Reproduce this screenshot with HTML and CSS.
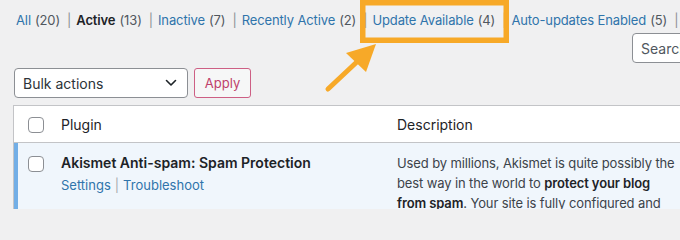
FILE: index.html
```html
<!DOCTYPE html>
<html lang="en">
<head>
<meta charset="utf-8">
<title>Plugins</title>
<link rel="stylesheet" href="styles.css">
</head>
<body>
<div class="page">
  <ul class="filters">
    <li><a class="link">All</a> <span class="count">(20)</span><span class="sep">|</span></li>
    <li><a class="current">Active</a> <span class="count">(13)</span><span class="sep">|</span></li>
    <li><a class="link">Inactive</a> <span class="count">(7)</span><span class="sep">|</span></li>
    <li><a class="link">Recently Active</a> <span class="count">(2)</span><span class="sep">|</span></li>
    <li><a class="link">Update Available</a> <span class="count">(4)</span><span class="sep">|</span></li>
    <li><a class="link">Auto-updates Enabled</a> <span class="count">(5)</span><span class="sep">|</span></li>
  </ul>

  <div class="search-row">
    <input class="search" type="search" placeholder="Search installed plugins...">
  </div>

  <div class="bulk-row">
    <div class="select">
      <span>Bulk actions</span>
      <svg class="chev" width="12" height="8" viewBox="0 0 12 8"><path d="M1.5 1.5 L6 6 L10.5 1.5" fill="none" stroke="#1d2327" stroke-width="1.6" stroke-linecap="round" stroke-linejoin="round"/></svg>
    </div>
    <button class="apply">Apply</button>
  </div>

  <div class="table">
    <div class="thead">
      <div class="cell check"><span class="cb"></span></div>
      <div class="cell col-plugin">Plugin</div>
      <div class="cell col-desc">Description</div>
    </div>
    <div class="row active">
      <div class="cell check"><span class="cb"></span></div>
      <div class="cell col-plugin">
        <div class="title">Akismet Anti-spam: Spam Protection</div>
        <div class="actions"><a class="link">Settings</a><span class="sep2">|</span><a class="link">Troubleshoot</a></div>
      </div>
      <div class="cell col-desc">
        <p class="desc">Used by millions, Akismet is quite possibly the best way in the world to <strong>protect your blog</strong> <strong>from spam</strong>. Your site is fully configured and</p>
      </div>
    </div>
  </div>

  <svg class="annot" width="680" height="209" viewBox="0 0 680 209">
    <rect x="362.75" y="2.75" width="143.5" height="37.5" fill="none" stroke="#f7a928" stroke-width="5.5"/>
    <line x1="328" y1="89" x2="360" y2="59" stroke="#f7a928" stroke-width="5" stroke-linecap="round"/>
    <polygon points="376,44 346,53 366,72" fill="#f7a928"/>
  </svg>
</div>
</body>
</html>
```

FILE: styles.css
```css
html, body {
  margin: 0;
  padding: 0;
}
body {
  background: #f0f0f1;
  font-family: Inter, "Liberation Sans", Arial, sans-serif;
  font-size: 13px;
  color: #3c434a;
  overflow: hidden;
  width: 680px;
  height: 209px;
}
.page {
  position: relative;
  width: 680px;
  height: 209px;
  overflow: hidden;
}
.filters {
  list-style: none;
  margin: 0;
  padding: 8px 0 0 16px;
  height: 25px;
  line-height: 25px;
  display: flex;
  white-space: nowrap;
  letter-spacing: -0.12px;
}
.filters li {
  display: flex;
}
.link {
  color: #2f74ab;
  text-decoration: none;
}
.current {
  color: #1d2327;
  font-weight: 600;
}
.count {
  color: #50575e;
  margin-left: 4px;
}
.sep {
  color: #8c8f94;
  margin: 0 5px 0 7px;
}
.search-row {
  height: 30px;
  padding-left: 632px;
  display: flex;
}
.search {
  box-sizing: border-box;
  width: 200px;
  height: 30px;
  border: 1px solid #8c8f94;
  border-radius: 4px;
  background: #fff;
  padding: 0 8px;
  font-family: inherit;
  font-size: 14px;
  color: #2c3338;
  flex: none;
}
.search::placeholder {
  color: #50575e;
}
.bulk-row {
  display: flex;
  gap: 6px;
  margin-top: 5px;
  padding-left: 14px;
}
.select {
  box-sizing: border-box;
  width: 174px;
  height: 30px;
  border: 1px solid #8c8f94;
  border-radius: 4px;
  background: #fff;
  display: flex;
  align-items: center;
  justify-content: space-between;
  padding: 0 8px 0 8px;
  font-size: 14px;
  color: #2c3338;
}
.chev {
  display: block;
  margin-right: 2px;
}
.apply {
  box-sizing: border-box;
  width: 57px;
  height: 30px;
  border: 1px solid #cd5f84;
  border-radius: 3px;
  background: #f6f7f7;
  color: #bf416b;
  font-family: inherit;
  font-size: 13px;
  padding: 0;
}
.table {
  margin-top: 7px;
  margin-left: 13px;
  width: 800px;
  border: 1px solid #c3c4c7;
  background: #fff;
}
.thead, .row {
  display: grid;
  grid-template-columns: 37px 336px 1fr;
}
.thead {
  height: 36px;
  border-bottom: 1px solid #c3c4c7;
  font-size: 14px;
  color: #1d2327;
}
.thead .cell {
  display: flex;
  align-items: center;
}
.thead .check {
  padding-left: 14px;
  padding-top: 2px;
}
.col-plugin, .col-desc {
  padding-left: 10px;
}
.cb {
  display: block;
  box-sizing: border-box;
  width: 16px;
  height: 16px;
  border: 1px solid #8c8f94;
  border-radius: 4px;
  background: #fff;
}
.row {
  background: #f0f6fc;
  height: 70px;
  overflow: hidden;
}
.row .check {
  border-left: 4px solid #72aee6;
  padding-left: 10px;
  padding-top: 13px;
}
.row .col-plugin {
  padding-top: 10px;
}
.title {
  font-size: 14px;
  font-weight: 600;
  line-height: 20px;
  color: #1d2327;
}
.actions {
  margin-top: 2px;
  line-height: 20px;
  font-size: 13px;
}
.sep2 {
  color: #a7aaad;
  margin: 0 4px;
}
.row .col-desc {
  padding-top: 10px;
}
.desc {
  margin: 0;
  width: 280px;
  line-height: 20px;
  font-size: 13px;
  letter-spacing: -0.12px;
  color: #3c434a;
}
.desc strong {
  font-weight: 600;
  color: #1d2327;
}
.annot {
  position: absolute;
  left: 0;
  top: 0;
  pointer-events: none;
}
```
